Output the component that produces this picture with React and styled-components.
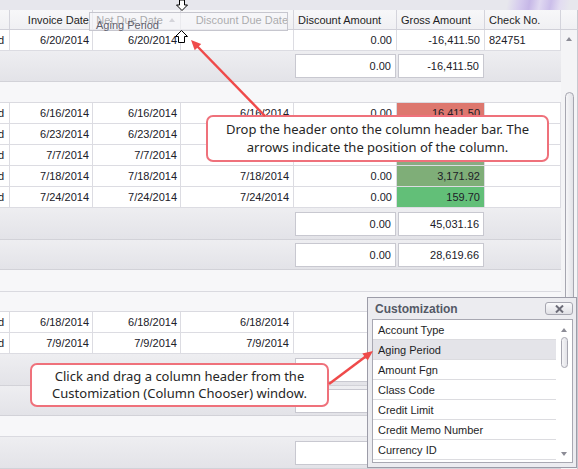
import React from 'react';
import styled, { createGlobalStyle } from 'styled-components';

const Global = createGlobalStyle`
  html, body { margin: 0; padding: 0; background: #fff; overflow: hidden; }
  body { font-family: "Liberation Sans", Arial, sans-serif; }
`;

const COLS = '10px 83px 88px 113px 103px 88px 76px';

const Screen = styled.div`
  position: relative;
  width: 578px;
  height: 469px;
  overflow: hidden;
  display: flex;
  flex-direction: column;
  background: #f7f7f9;
  font-family: "Liberation Sans", Arial, sans-serif;
  font-size: 11px;
  color: #202028;
`;

const TopStrip = styled.div`
  flex: none;
  height: 10px;
  background: linear-gradient(100deg, #e7e7ed 0px, #e7e7ed 500px, #d6ccee 512px, #c6b7e7 522px, #e0d9f1 532px, #cbbeea 543px, #e2dcf1 552px, #e7e7ed 562px);
`;

const Main = styled.div`
  flex: 1;
  display: flex;
  min-height: 0;
`;

const Grid = styled.div`
  flex: none;
  width: 561px;
  display: flex;
  flex-direction: column;
`;

const HeaderRow = styled.div`
  flex: none;
  display: grid;
  grid-template-columns: ${COLS};
  height: 20px;
  box-sizing: border-box;
  background: linear-gradient(#f7f7f9, #f0f0f3);
  border-bottom: 1px solid #d0d0d8;
`;

const HeaderCell = styled.div`
  display: flex;
  align-items: center;
  justify-content: ${p => (p.$right ? 'flex-end' : 'flex-start')};
  gap: 6px;
  padding: ${p => (p.$right ? `0 ${p.$pad || 3}px 0 0` : '0 0 0 4px')};
  border-right: 1px solid #d4d4dc;
  white-space: nowrap;
  overflow: hidden;
  color: #1e1e24;
`;

const SortTri = styled.span`
  width: 0;
  height: 0;
  border-left: 3px solid transparent;
  border-right: 3px solid transparent;
  border-bottom: 4px solid #9a9aa4;
`;

const DataRow = styled.div`
  flex: none;
  display: grid;
  grid-template-columns: ${COLS};
  height: 21px;
`;

const Cell = styled.div`
  display: flex;
  align-items: center;
  justify-content: ${p => (p.$left ? 'flex-start' : 'flex-end')};
  padding: ${p => (p.$left ? '0 0 0 4px' : `0 ${p.$pad ?? 3}px 0 0`)};
  background: ${p => p.$bg || '#fff'};
  border-right: 1px solid #dcdce2;
  border-bottom: 1px solid #dcdce2;
  white-space: nowrap;
  overflow: hidden;
  box-sizing: border-box;
`;

const Footer = styled.div`
  flex: none;
  display: grid;
  grid-template-columns: ${COLS};
  align-items: center;
  height: ${p => p.$h}px;
  box-sizing: border-box;
  background: linear-gradient(#eeeef1, #e3e3e8);
  border-bottom: 1px solid #d2d2d8;
`;

const SumBox = styled.div`
  grid-column: ${p => p.$col};
  height: 24px;
  margin: 0 1px;
  box-sizing: border-box;
  background: #fff;
  border: 1px solid #c8c8d0;
  display: flex;
  align-items: center;
  justify-content: flex-end;
  padding-right: 4px;
`;

const GroupRow = styled.div`
  flex: none;
  height: ${p => p.$h}px;
  box-sizing: border-box;
  background: #f7f7f9;
  border-bottom: 1px solid #dadae0;
`;

const VScroll = styled.div`
  flex: none;
  width: 17px;
  display: flex;
  flex-direction: column;
`;

const Corner = styled.div`
  flex: none;
  height: 20px;
  box-sizing: border-box;
  background: linear-gradient(#f7f7f9, #f0f0f3);
  border-bottom: 1px solid #d0d0d8;
  border-right: 1px solid #c8c8d0;
`;

const Track = styled.div`
  flex: 1;
  display: flex;
  flex-direction: column;
  align-items: center;
  padding-top: 7px;
  background: #f4f4f6;
  border-right: 1px solid #c8c8d0;
`;

const UpTri = styled.span`
  flex: none;
  width: 0;
  height: 0;
  border-left: 3.5px solid transparent;
  border-right: 3.5px solid transparent;
  border-bottom: 4px solid #8c8c96;
`;

const DownTri = styled.span`
  flex: none;
  width: 0;
  height: 0;
  border-left: 3.5px solid transparent;
  border-right: 3.5px solid transparent;
  border-top: 4px solid #8c8c96;
`;

const Thumb = styled.div`
  flex: none;
  width: ${p => p.$w}px;
  height: ${p => p.$h}px;
  margin-top: ${p => p.$mt}px;
  box-sizing: border-box;
  border: 1px solid #a6a6b0;
  border-radius: 5px;
  background: linear-gradient(to right, #f6f6f8, #e2e2e7);
`;

const Ghost = styled.div`
  position: absolute;
  left: 89px;
  top: 12px;
  width: 199px;
  height: 19px;
  box-sizing: border-box;
  border: 1px solid #c6c6ce;
  background: rgba(246, 246, 249, 0.64);
  padding: 6px 0 0 6px;
  line-height: 13px;
  color: #60606c;
  font-size: 11px;
  overflow: visible;
`;

const Callout = styled.div`
  position: absolute;
  left: ${p => p.$x}px;
  top: ${p => p.$y}px;
  width: ${p => p.$w}px;
  height: ${p => p.$h}px;
  box-sizing: border-box;
  background: #fff;
  border: 2px solid #ef717b;
  border-radius: 7px;
  display: flex;
  align-items: center;
  justify-content: center;
  text-align: center;
  font-family: "Noto Sans", "Open Sans", sans-serif;
  font-size: 13px;
  line-height: 17.5px;
  color: #262626;
`;

const CustWin = styled.div`
  position: absolute;
  left: 367px;
  top: 297px;
  width: 210px;
  height: 171px;
  box-sizing: border-box;
  border: 1px solid #9c9ca8;
  background: #ececf0;
  display: flex;
  flex-direction: column;
`;

const CustTitle = styled.div`
  flex: none;
  height: 21px;
  display: flex;
  align-items: center;
  justify-content: space-between;
  padding: 0 3px 0 7px;
`;

const TitleText = styled.span`
  font-weight: bold;
  font-size: 12px;
  color: #545966;
`;

const CloseBtn = styled.div`
  width: 28px;
  height: 13px;
  box-sizing: border-box;
  border: 1px solid #a6a6b0;
  border-radius: 3px;
  background: linear-gradient(#fafafc, #e0e0e5);
  display: flex;
  align-items: center;
  justify-content: center;
`;

const ListBox = styled.div`
  flex: none;
  height: 144px;
  margin: 0 3px 0 4px;
  box-sizing: border-box;
  border: 1px solid #a8a8b2;
  background: #fff;
  display: flex;
`;

const Items = styled.div`
  flex: 1;
  display: flex;
  flex-direction: column;
  overflow: hidden;
`;

const Item = styled.div`
  flex: none;
  height: 20px;
  box-sizing: border-box;
  border-bottom: 1px solid #dcdce0;
  padding-left: 5px;
  display: flex;
  align-items: center;
  font-size: 11px;
  color: #1e1e26;
  background: ${p => (p.$sel ? '#e4e4e9' : '#fff')};
`;

const ListScroll = styled.div`
  flex: none;
  width: 16px;
  display: flex;
  flex-direction: column;
  align-items: center;
  padding: 8px 0 6px;
  box-sizing: border-box;
`;

const Spacer = styled.div`
  flex: 1;
`;

const Overlay = styled.svg`
  position: absolute;
  left: 0;
  top: 0;
  pointer-events: none;
`;

const group2 = [
  { inv: '6/16/2014', disc: '6/16/2014', gross: '16,411.50', bg: '#dd776e' },
  { inv: '6/23/2014', disc: '6/23/2014', gross: '14,218.54', bg: '#c9a77a' },
  { inv: '7/7/2014', disc: '7/7/2014', gross: '11,069.50', bg: '#8aab83' },
  { inv: '7/18/2014', disc: '7/18/2014', gross: '3,171.92', bg: '#7fae78' },
  { inv: '7/24/2014', disc: '7/24/2014', gross: '159.70', bg: '#62bf78' },
];

const group3 = [
  { inv: '6/18/2014', disc: '6/18/2014', gross: '1,250.00', bg: '#fff' },
  { inv: '7/9/2014', disc: '7/9/2014', gross: '2,480.00', bg: '#fff' },
];

const fields = [
  'Account Type',
  'Aging Period',
  'Amount Fgn',
  'Class Code',
  'Credit Limit',
  'Credit Memo Number',
  'Currency ID',
  'Customer ID',
];

function Row({ inv, net, disc, amt = '0.00', gross, bg, chk = '' }) {
  return (
    <DataRow>
      <Cell $pad={5}>d</Cell>
      <Cell>{inv}</Cell>
      <Cell>{net ?? inv}</Cell>
      <Cell $pad={4}>{disc}</Cell>
      <Cell $pad={4}>{amt}</Cell>
      <Cell $bg={bg} $pad={4}>{gross}</Cell>
      <Cell $left>{chk}</Cell>
    </DataRow>
  );
}

function Sum({ h, a, b }) {
  return (
    <Footer $h={h}>
      <SumBox $col={5}>{a}</SumBox>
      <SumBox $col={6}>{b}</SumBox>
    </Footer>
  );
}

export default function App() {
  return (
    <Screen>
      <Global />
      <TopStrip />
      <Main>
        <Grid>
          <HeaderRow>
            <HeaderCell />
            <HeaderCell $right $pad={3}>Invoice Date</HeaderCell>
            <HeaderCell $right $pad={5}>
              Net Due Date
              <SortTri />
            </HeaderCell>
            <HeaderCell $right $pad={5}>Discount Due Date</HeaderCell>
            <HeaderCell>Discount Amount</HeaderCell>
            <HeaderCell>Gross Amount</HeaderCell>
            <HeaderCell>Check No.</HeaderCell>
          </HeaderRow>
          <Row inv="6/20/2014" disc="" gross="-16,411.50" chk="824751" />
          <Sum h={31} a="0.00" b="-16,411.50" />
          <GroupRow $h={21} />
          {group2.map(r => (
            <Row key={r.inv} {...r} />
          ))}
          <Sum h={32} a="0.00" b="45,031.16" />
          <Sum h={30} a="0.00" b="28,619.66" />
          <GroupRow $h={22} />
          <GroupRow $h={20} />
          {group3.map(r => (
            <Row key={r.inv} {...r} />
          ))}
          <Sum h={32} a="0.00" b="3,730.00" />
          <Sum h={30} a="0.00" b="32,349.66" />
          <GroupRow $h={21} />
          <Sum h={32} a="0.00" b="32,349.66" />
        </Grid>
        <VScroll>
          <Corner />
          <Track>
            <UpTri />
            <Thumb $w={9} $h={360} $mt={51} />
          </Track>
        </VScroll>
      </Main>

      <Ghost>Aging Period</Ghost>

      <CustWin>
        <CustTitle>
          <TitleText>Customization</TitleText>
          <CloseBtn>
            <svg width="9" height="8" viewBox="0 0 9 8">
              <path d="M1 0.5 L8 7.5 M8 0.5 L1 7.5" stroke="#6c6c78" strokeWidth="2" />
            </svg>
          </CloseBtn>
        </CustTitle>
        <ListBox>
          <Items>
            {fields.map(f => (
              <Item key={f} $sel={f === 'Aging Period'}>{f}</Item>
            ))}
          </Items>
          <ListScroll>
            <UpTri />
            <Thumb $w={7} $h={31} $mt={5} />
            <Spacer />
            <DownTri />
          </ListScroll>
        </ListBox>
      </CustWin>

      <Callout $x={206} $y={115} $w={343} $h={47}>
        Drop the header onto the column header bar. The
        <br />
        arrows indicate the position of the column.
      </Callout>
      <Callout $x={30} $y={363} $w={299} $h={44}>
        Click and drag a column header from the
        <br />
        Customization (Column Chooser) window.
      </Callout>

      <Overlay width="578" height="469" viewBox="0 0 578 469">
        <polygon
          points="179.5,0 184.5,0 184.5,5 187.5,5 182,10.5 176.5,5 179.5,5"
          fill="#fff"
          stroke="#000"
          strokeWidth="1"
        />
        <polygon
          points="181.5,30.5 187.5,36.5 184.5,36.5 184.5,42.5 178.5,42.5 178.5,36.5 175.5,36.5"
          fill="#fff"
          stroke="#000"
          strokeWidth="1"
        />
        <line x1="265" y1="116" x2="196" y2="45" stroke="#ef4a4a" strokeWidth="2.5" />
        <polygon points="191,40 201.2,44 194.7,50.3" fill="#ef4a4a" />
        <line x1="329" y1="384" x2="367" y2="355.5" stroke="#ef4a4a" strokeWidth="2.5" />
        <polygon points="373,351 367.7,360.6 362.3,353.4" fill="#ef4a4a" />
      </Overlay>
    </Screen>
  );
}
